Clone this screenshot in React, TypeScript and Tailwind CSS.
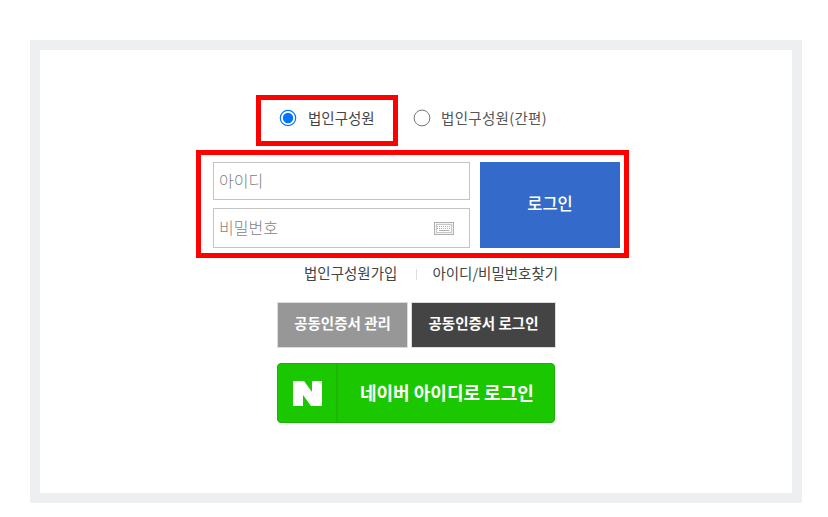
import React from "react";

function Radio({ checked }: { checked?: boolean }) {
  return (
    <svg width="18" height="18" viewBox="0 0 18 18" className="shrink-0">
      {checked ? (
        <>
          <circle cx="9" cy="9" r="7.7" fill="#fff" stroke="#0075ff" strokeWidth="1.2" />
          <circle cx="9" cy="9" r="5.2" fill="#0075ff" />
        </>
      ) : (
        <circle cx="9" cy="9" r="7.9" fill="#fff" stroke="#767676" strokeWidth="1" />
      )}
    </svg>
  );
}

function Keyboard() {
  return (
    <svg width="20" height="13" viewBox="0 0 20 13" className="shrink-0">
      <rect x="0.5" y="0.5" width="19" height="12" fill="#f2f2f2" stroke="#b0b0b0" />
      <rect x="2.5" y="2.5" width="15" height="8" fill="#fff" stroke="#c8c8c8" />
      <path d="M3 4.5h14M3 6.5h14" stroke="#b0b0b0" strokeWidth="1" strokeDasharray="1 1" />
      <path d="M5 8.5h10" stroke="#b0b0b0" strokeWidth="1" />
    </svg>
  );
}

export default function App() {
  return (
    <div className="w-[828px] h-[517px] bg-white pt-[40px] pl-[30px] font-['Noto_Sans_CJK_KR','Liberation_Sans',sans-serif] overflow-hidden">
      <div className="w-[772px] h-[463px] border-[10px] border-[#eeeff1] bg-white pt-[45px] pl-[156px] flex flex-col items-start">
        <div className="flex items-center">
          <div className="w-[142px] h-[51px] ml-[60px] border-[5px] border-[#ff0000] flex items-center pl-[18px] pb-[5px]">
            <Radio checked />
            <span className="ml-[11px] text-[14.5px] leading-none text-[#444]">법인구성원</span>
          </div>
          <div className="flex items-center ml-[15px] pb-[5px]">
            <Radio />
            <span className="ml-[10px] text-[14.5px] tracking-[0.3px] leading-none text-[#555]">법인구성원(간편)</span>
          </div>
        </div>

        <div className="w-[433px] h-[108px] mt-[4px] border-[5px] border-[#ff0000] pt-[7px] pl-[12px] flex">
          <div className="flex flex-col w-[257px]">
            <div className="h-[38px] border border-[#c4c4c4] flex items-center pl-[5px] pb-[3px] text-[16px] font-light leading-none text-[#7f7f7f]">아이디</div>
            <div className="h-[40px] mt-[8px] border border-[#c4c4c4] flex items-center justify-between pl-[5px] pr-[15px] text-[16px] font-light leading-none text-[#7f7f7f]">
              <span className="mb-[3px]">비밀번호</span>
              <Keyboard />
            </div>
          </div>
          <button className="w-[140px] h-[86px] ml-[10px] pb-[4px] bg-[#346ac9] text-white text-[16.5px] font-medium leading-none">로그인</button>
        </div>

        <div className="flex items-center mt-[5px] ml-[108px] h-[20px] text-[14.5px] leading-none text-[#444]">
          <span>법인구성원가입</span>
          <span className="w-px h-[11px] bg-[#ddd] ml-[19px] mr-[15px] mt-[2px]" />
          <span>아이디/비밀번호찾기</span>
        </div>

        <div className="flex mt-[19px] ml-[81px] gap-[3px]">
          <div className="w-[131px] h-[46px] pb-[3px] bg-[#979797] border border-[#dcdcdc] flex items-center justify-center text-white text-[14.5px] font-bold leading-none">공동인증서 관리</div>
          <div className="w-[145px] h-[46px] pb-[3px] bg-[#444444] border border-[#dcdcdc] flex items-center justify-center text-white text-[14.5px] font-bold leading-none">공동인증서 로그인</div>
        </div>

        <div className="flex mt-[15px] ml-[81px] w-[278px] h-[60px] rounded-[4px] bg-[#1bc800] border border-[#19b400]">
          <div className="w-[60px] h-full border-r-2 border-[#1bb800] flex items-center justify-center">
            <svg width="29" height="25" viewBox="0 0 29 25">
              <path d="M0 0h11l8 11V0h10v25H18l-8-11v11H0z" fill="#fff" />
            </svg>
          </div>
          <div className="flex-1 flex items-center pl-[22px] pb-[3px] text-white text-[18px] font-bold leading-none">네이버 아이디로 로그인</div>
        </div>
      </div>
    </div>
  );
}
